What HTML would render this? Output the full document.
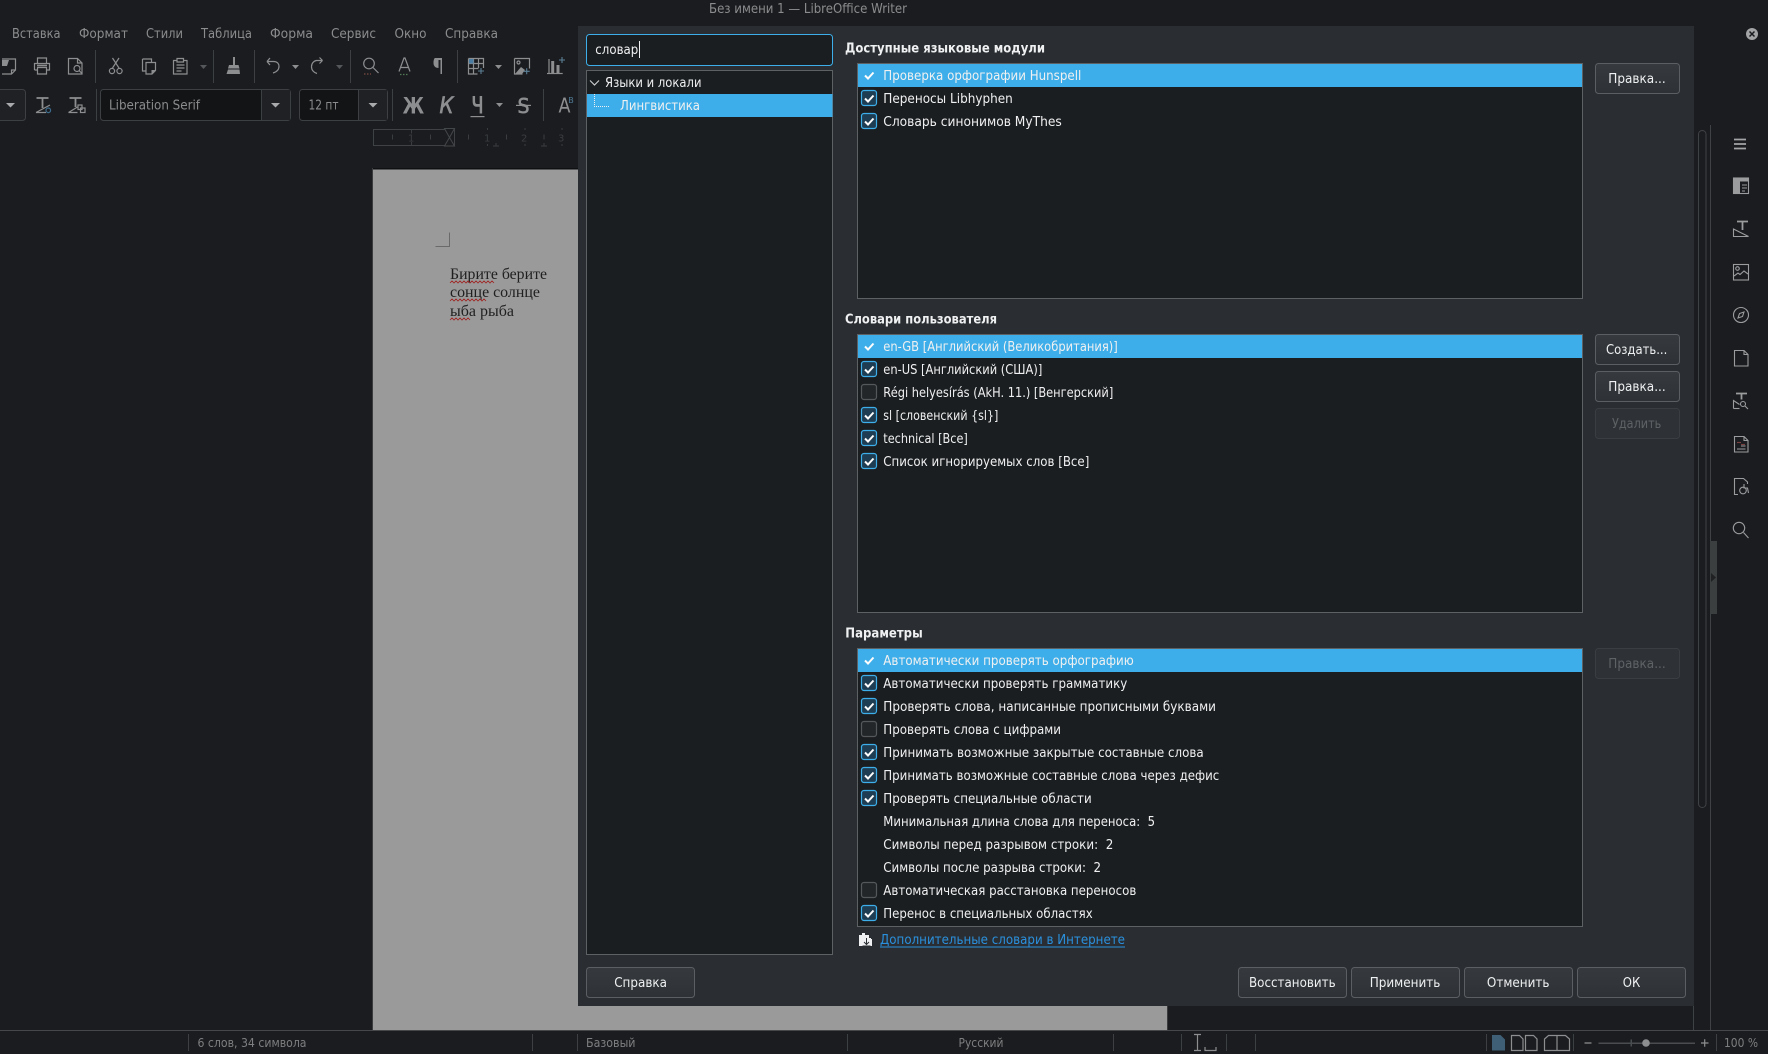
<!DOCTYPE html>
<html lang="ru"><head><meta charset="utf-8"><title>LibreOffice Writer</title>
<style>
html,body{margin:0;padding:0;background:#1b1c1f;width:1768px;height:1054px;overflow:hidden}
svg{display:block}
text{font-family:"DejaVu Sans","Liberation Sans",sans-serif;font-size:13px;white-space:pre}
.m{fill:#8b8c8d}
.w{fill:#eff0f1}
.h{fill:#eff0f1;font-weight:bold}
.d{fill:#5f6265}
.st{fill:#7e7f80;font-size:12px}
.ic{fill:none;stroke:#8c8e90;stroke-width:1.2}
.f{fill:#8c8e90;stroke:none}
.sep{stroke:#3d4043;stroke-width:1}
.cb{fill:#1e3d52;stroke:#3daee9;stroke-width:1.2}
.cu{fill:#232629;stroke:#55585b;stroke-width:1.2}
.ck{fill:none;stroke:#fcfcfc;stroke-width:2}
.btn{fill:url(#bg);stroke:#5b5f63;stroke-width:1}
.dis{fill:#2e3236;stroke:#3a3e42;stroke-width:1}
.list{fill:#1b1e20;stroke:#5e6164;stroke-width:1}
.sel{fill:#3daee9}
.dk{fill:#8c8e90}
.doc{font-family:"Liberation Serif",serif;font-size:16px;fill:#1f1f1f}
.wave{fill:none;stroke:#a02020;stroke-width:.8}
.sb{fill:none;stroke:#9a9c9e;stroke-width:1.1}
</style></head><body>
<svg width="1768" height="1054" viewBox="0 0 1768 1054" xmlns="http://www.w3.org/2000/svg">
<defs><linearGradient id="bg" x1="0" y1="0" x2="0" y2="1"><stop offset="0" stop-color="#363a3e"/><stop offset="1" stop-color="#2e3236"/></linearGradient></defs>
<rect width="1768" height="1054" fill="#1b1c1f"/>

<!-- title -->
<text x="709" y="13" class="m" textLength="198" lengthAdjust="spacingAndGlyphs">Без имени 1 — LibreOffice Writer</text>

<!-- menu -->
<g class="m">
<text x="12" y="38" textLength="48.5" lengthAdjust="spacingAndGlyphs">Вставка</text>
<text x="79" y="38" textLength="49" lengthAdjust="spacingAndGlyphs">Формат</text>
<text x="146" y="38" textLength="37" lengthAdjust="spacingAndGlyphs">Стили</text>
<text x="201" y="38" textLength="51" lengthAdjust="spacingAndGlyphs">Таблица</text>
<text x="270" y="38" textLength="43" lengthAdjust="spacingAndGlyphs">Форма</text>
<text x="331" y="38" textLength="45" lengthAdjust="spacingAndGlyphs">Сервис</text>
<text x="394.5" y="38" textLength="32" lengthAdjust="spacingAndGlyphs">Окно</text>
<text x="445" y="38" textLength="53" lengthAdjust="spacingAndGlyphs">Справка</text>
</g>

<!-- toolbar 1 -->
<g class="sep">
<path d="M95.5 50v33M213.5 50v33M254.5 50v33M350.5 50v33M457.5 50v33M96.5 89v32M392.5 89v32M543.5 89v32"/>
</g>
<g class="ic">
<path d="M2 59h13.5v11l-4 4H2M11.5 74v-4h4"/><path class="f" d="M2 60h7l-2 6H2z"/>
<path d="M37.5 63v-5h9v5M34.5 70v-6.5h15V70h-3M34.5 70h3M37.5 67.5h9V74h-9z"/><path d="M37 65.5h10" stroke-width="1.6"/>
<path d="M68.5 74V58.5h9l4.5 4.5V74zM77.5 58.5V63h4.5"/><circle cx="77" cy="68.5" r="3"/><path d="M79.2 70.7l2.8 2.8"/>
<path d="M112.5 58l6.5 10M119 58l-6.5 10"/><circle cx="112" cy="71" r="2.6"/><circle cx="119.5" cy="71" r="2.6"/>
<path d="M142.5 59h9v3M142.5 59v12h3M146 62.5h9.5v8L152 74h-6z"/><path class="f" d="M151.5 74l4-4h-4z"/>
<path d="M176.5 60.5h-3V74h13.5V60.500h-3M177 58.500h6.500v3.500H177zM176.500 65h8M176.500 68h8M176.500 71h5"/>
<path class="f" d="M233 57h2v8h3.500l1 3.500h-11.500l1-3.500H233z"/><path class="f" d="M228 69.500h11.500l.5 4.500h-13.500z"/>
<path d="M268.500 62.500h6c4.500 0 5.500 3 5.500 4.800 0 3.500-2.500 5.700-6 6.700M268 62.500l3-3.500M268 62.500l3 3.500" transform="translate(-1 -1)"/>
<path d="M322.500 60.500h-6c-3 .5-5 3-5 6.200 0 3.500 2.500 6 5.500 6.800M322.500 60.500l-3-3M322.500 60.500l-3 3" />
<circle cx="369" cy="63.500" r="5.300"/><path d="M373 67.500l5.500 5.500"/>
<path d="M399 71.500l5-13.500h1l5 13.500M400.500 67.500h8.500"/>
<path class="f" d="M435 58h7v16h-1.500V60h-2v8c-2.500 0-5-1.500-5-5s1-5 1.500-5z"/>
<path d="M468.500 58.500h15V68M468.500 58.500V74h9M468.500 63.500h15M468.500 68.500h10M473.500 58.500V74M478.500 58.500V68"/>
<rect class="f" x="469" y="59" width="4.500" height="4.500" style="fill:#4a7ba0"/>
<path d="M514.500 58.500h15v10M514.500 58.500V74h8"/><path class="f" d="M515 74l6-7 4 3-3 4z"/><circle cx="518.500" cy="62.500" r="1.500"/>
<path d="M549 59v14"/><path d="M552.700 61v12" stroke-width="3"/><path d="M558 65v8" stroke-width="3"/><path d="M547 73.500h15.700"/>
</g>
<g stroke="#5b7f96" stroke-width="1.100"><path d="M478 71h6M481 68v6M523.700 71.300h6M526.700 68.300v6M559 60h6M562 57v6"/></g>
<path d="M364 74h7" stroke="#7a4a40" stroke-width="1.200" stroke-dasharray="1.500 1.500"/>
<path d="M400 74.500h9" stroke="#4f7a55" stroke-width="1.200" stroke-dasharray="1.500 1.500"/>
<g fill="#8c8e90">
<path d="M292 65h7l-3.500 4z"/><path d="M495 65h7l-3.500 4z"/>
<path d="M200 65h7l-3.500 4z" fill="#55585a"/><path d="M336 65h7l-3.500 4z" fill="#55585a"/>
</g>

<!-- toolbar 2 -->
<rect x="-6" y="89.500" width="31.500" height="31" rx="3" fill="#1f2124" stroke="#3d4043"/>
<path d="M6 103h9l-4.500 4.500z" fill="#a8aaac"/>
<g class="ic">
<path d="M36.500 98h12M42.500 98v10" stroke-width="1.800"/><path d="M36 112.500l14-7.500M36 112.500h10"/>
<path d="M69.500 98h12M75.500 98v9" stroke-width="1.800"/><path d="M68.500 112.500l9-5.500M68.500 112.500h9"/>
<rect x="78" y="105" width="4" height="4.500"/><rect x="80.500" y="108" width="4.500" height="4.500"/>
</g>
<circle cx="48.300" cy="110.300" r="2.300" fill="none" stroke="#3c6c8c" stroke-width="1.200"/>
<rect x="100.500" y="89.500" width="190" height="31" rx="3" fill="#121415" stroke="#3d4043"/>
<path d="M261.500 90h28.500v30h-28.500z" fill="#1f2124"/><path d="M261.500 90v30" stroke="#3d4043"/>
<path d="M271 103h9l-4.500 4.500z" fill="#a8aaac"/>
<text x="109" y="109.500" class="m" textLength="91" lengthAdjust="spacingAndGlyphs">Liberation Serif</text>
<rect x="299.500" y="89.500" width="88" height="31" rx="3" fill="#121415" stroke="#3d4043"/>
<path d="M358.500 90h28.500v30h-28.500z" fill="#1f2124"/><path d="M358.500 90v30" stroke="#3d4043"/>
<path d="M368.500 103h9l-4.500 4.500z" fill="#a8aaac"/>
<text x="308.500" y="109.500" class="m" textLength="30" lengthAdjust="spacingAndGlyphs">12 пт</text>
<g fill="#8c8e90">
<text x="402.600" y="113.300" style="font-size:22px;font-weight:bold;fill:#8c8e90" textLength="21.500" lengthAdjust="spacingAndGlyphs">Ж</text>
<text x="439.500" y="113" style="font-size:22px;font-style:italic;fill:#8c8e90;stroke:#8c8e90;stroke-width:.7" textLength="14" lengthAdjust="spacingAndGlyphs">К</text>
<text x="471.500" y="113" style="font-size:22px;fill:#8c8e90;stroke:#8c8e90;stroke-width:.9" textLength="12" lengthAdjust="spacingAndGlyphs">Ч</text>
<rect x="470.500" y="116" width="14" height="1.200"/>
<path d="M496 103h7l-3.500 4z"/>
<text x="517.500" y="112.800" style="font-size:20px;fill:#8c8e90;stroke:#8c8e90;stroke-width:.6" textLength="12" lengthAdjust="spacingAndGlyphs">S</text>
<rect x="516" y="104.800" width="15" height="1.200"/>
<text x="558.500" y="112.700" style="font-size:20px;fill:#8c8e90" textLength="12" lengthAdjust="spacingAndGlyphs">A</text>
</g>
<text x="568.300" y="103" style="font-size:8px;fill:#4f7a96">B</text>

<!-- ruler -->
<rect x="373.500" y="129.500" width="81" height="16" fill="none" stroke="#3f4245"/>
<path d="M444.500 128.500h10L449.500 137.500 454.500 146h-10l5-8.500z" fill="#1b1c1f" stroke="#44474a"/>
<g stroke="#3a3d40"><path d="M392.500 134.500v5M411.500 129.500v4M411.500 142v3.500M430.500 134.500v5M468.500 134.500v5M506.500 134.500v5M544 134.500v5M487.500 128v2M487.500 144v2M525 128v2M525 144v2M562 128v2M562 144v2M493 146h6M496 143v3M541 146h6M544 143v3"/></g>
<g><text x="408" y="141.500" style="font-size:10px;fill:#3a3d40">1</text><text x="484" y="141.500" style="font-size:10px;fill:#3a3d40">1</text><text x="521" y="141.500" style="font-size:10px;fill:#3a3d40">2</text><text x="558" y="141.500" style="font-size:10px;fill:#3a3d40">3</text></g>

<!-- page -->
<rect x="373" y="169" width="794" height="861" fill="#9a9a9a"/>
<rect x="372" y="168" width="795" height="1.500" fill="#0f1011"/>
<rect x="372" y="168" width="1" height="862" fill="#3a3c3e"/>
<rect x="1167" y="1006" width="1" height="24" fill="#3a3c3e"/>
<path d="M435.500 246.500h14v-14" fill="none" stroke="#6a6a6a" stroke-width="1"/>
<text class="doc" x="450" y="279" textLength="97" lengthAdjust="spacingAndGlyphs">Бирите берите</text>
<text class="doc" x="450" y="297" textLength="90" lengthAdjust="spacingAndGlyphs">сонце солнце</text>
<text class="doc" x="450" y="316" textLength="64" lengthAdjust="spacingAndGlyphs">ыба рыба</text>
<path class="wave" d="M450 283l2-2 2 2 2-2 2 2 2-2 2 2 2-2 2 2 2-2 2 2 2-2 2 2 2-2 2 2 2-2 2 2 2-2 2 2 2-2 2 2 2-2 2 2"/>
<path class="wave" d="M450 301l2-2 2 2 2-2 2 2 2-2 2 2 2-2 2 2 2-2 2 2 2-2 2 2 2-2 2 2 2-2 2 2 2-2 2 2"/>
<path class="wave" d="M450 320l2-2 2 2 2-2 2 2 2-2 2 2 2-2 2 2 2-2 2 2"/>

<!-- dialog -->
<rect x="578" y="26" width="1116" height="980" fill="#2a2e32"/>

<!-- search -->
<rect x="586.500" y="34.500" width="246" height="31" rx="3" fill="#1b1e20" stroke="#3daee9"/>
<text x="595.300" y="54" class="w" textLength="43" lengthAdjust="spacingAndGlyphs">словар</text>
<rect x="639" y="41" width="1" height="17" fill="#eff0f1"/>

<!-- tree -->
<rect class="list" x="586.500" y="70.500" width="246" height="884"/>
<rect class="sel" x="587" y="94" width="245.500" height="23"/>
<path d="M590 80.500l4.500 4.500 4.500-4.500" fill="none" stroke="#c8cacc" stroke-width="1.200"/>
<text x="605" y="87" class="w" textLength="96.500" lengthAdjust="spacingAndGlyphs">Языки и локали</text>
<path d="M594.500 94v12.500h15" fill="none" stroke="#eff0f1" stroke-width="1" stroke-dasharray="1 1"/>
<text x="620" y="110" class="w" textLength="80" lengthAdjust="spacingAndGlyphs">Лингвистика</text>

<!-- headings -->
<text x="845" y="52.500" class="h" textLength="200" lengthAdjust="spacingAndGlyphs">Доступные языковые модули</text>
<text x="845" y="323.500" class="h" textLength="152" lengthAdjust="spacingAndGlyphs">Словари пользователя</text>
<text x="845.300" y="637.500" class="h" textLength="77.400" lengthAdjust="spacingAndGlyphs">Параметры</text>

<!-- list 1 -->
<rect class="list" x="857.500" y="63.500" width="725" height="235"/>
<rect class="sel" x="858" y="64" width="724" height="23"/>
<path class="ck" d="M865 75.500l3 3 5.500-6"/>
<text x="883.300" y="80" class="w" textLength="198" lengthAdjust="spacingAndGlyphs">Проверка орфографии Hunspell</text>
<rect class="cb" x="861.500" y="90.500" width="15" height="15" rx="2.500"/><path class="ck" d="M865 98.500l3 3 5.500-6"/>
<text x="883.300" y="103" class="w" textLength="129.500" lengthAdjust="spacingAndGlyphs">Переносы Libhyphen</text>
<rect class="cb" x="861.500" y="113.500" width="15" height="15" rx="2.500"/><path class="ck" d="M865 121.500l3 3 5.500-6"/>
<text x="883.300" y="126" class="w" textLength="178.500" lengthAdjust="spacingAndGlyphs">Словарь синонимов MyThes</text>

<!-- list 2 -->
<rect class="list" x="857.500" y="334.500" width="725" height="278"/>
<rect class="sel" x="858" y="335" width="724" height="23"/>
<path class="ck" d="M865 346.500l3 3 5.500-6"/>
<text x="883.300" y="351" class="w" textLength="234.500" lengthAdjust="spacingAndGlyphs">en-GB [Английский (Великобритания)]</text>
<rect class="cb" x="861.500" y="361.500" width="15" height="15" rx="2.500"/><path class="ck" d="M865 369.500l3 3 5.500-6"/>
<text x="883.300" y="374" class="w" textLength="159" lengthAdjust="spacingAndGlyphs">en-US [Английский (США)]</text>
<rect class="cu" x="861.500" y="384.500" width="15" height="15" rx="2.500"/>
<text x="883.300" y="397" class="w" textLength="230" lengthAdjust="spacingAndGlyphs">Régi helyesírás (AkH. 11.) [Венгерский]</text>
<rect class="cb" x="861.500" y="407.500" width="15" height="15" rx="2.500"/><path class="ck" d="M865 415.500l3 3 5.500-6"/>
<text x="883.300" y="420" class="w" textLength="115" lengthAdjust="spacingAndGlyphs">sl [словенский {sl}]</text>
<rect class="cb" x="861.500" y="430.500" width="15" height="15" rx="2.500"/><path class="ck" d="M865 438.500l3 3 5.500-6"/>
<text x="883.300" y="443" class="w" textLength="84.500" lengthAdjust="spacingAndGlyphs">technical [Все]</text>
<rect class="cb" x="861.500" y="453.500" width="15" height="15" rx="2.500"/><path class="ck" d="M865 461.500l3 3 5.500-6"/>
<text x="883.300" y="466" class="w" textLength="206" lengthAdjust="spacingAndGlyphs">Список игнорируемых слов [Все]</text>

<!-- list 3 -->
<rect class="list" x="857.500" y="648.500" width="725" height="278"/>
<rect class="sel" x="858" y="649" width="724" height="23"/>
<path class="ck" d="M865 660.500l3 3 5.500-6"/>
<text x="883.300" y="665" class="w" textLength="250.500" lengthAdjust="spacingAndGlyphs">Автоматически проверять орфографию</text>
<rect class="cb" x="861.500" y="675.500" width="15" height="15" rx="2.500"/><path class="ck" d="M865 683.500l3 3 5.500-6"/>
<text x="883.300" y="688" class="w" textLength="244" lengthAdjust="spacingAndGlyphs">Автоматически проверять грамматику</text>
<rect class="cb" x="861.500" y="698.500" width="15" height="15" rx="2.500"/><path class="ck" d="M865 706.500l3 3 5.500-6"/>
<text x="883.300" y="711" class="w" textLength="332.700" lengthAdjust="spacingAndGlyphs">Проверять слова, написанные прописными буквами</text>
<rect class="cu" x="861.500" y="721.500" width="15" height="15" rx="2.500"/>
<text x="883.300" y="734" class="w" textLength="177.700" lengthAdjust="spacingAndGlyphs">Проверять слова с цифрами</text>
<rect class="cb" x="861.500" y="744.500" width="15" height="15" rx="2.500"/><path class="ck" d="M865 752.500l3 3 5.500-6"/>
<text x="883.300" y="757" class="w" textLength="320.400" lengthAdjust="spacingAndGlyphs">Принимать возможные закрытые составные слова</text>
<rect class="cb" x="861.500" y="767.500" width="15" height="15" rx="2.500"/><path class="ck" d="M865 775.500l3 3 5.500-6"/>
<text x="883.300" y="780" class="w" textLength="336" lengthAdjust="spacingAndGlyphs">Принимать возможные составные слова через дефис</text>
<rect class="cb" x="861.500" y="790.500" width="15" height="15" rx="2.500"/><path class="ck" d="M865 798.500l3 3 5.500-6"/>
<text x="883.300" y="803" class="w" textLength="208.400" lengthAdjust="spacingAndGlyphs">Проверять специальные области</text>
<text x="883.300" y="826" class="w" textLength="271.700" lengthAdjust="spacingAndGlyphs">Минимальная длина слова для переноса:  5</text>
<text x="883.300" y="849" class="w" textLength="230" lengthAdjust="spacingAndGlyphs">Символы перед разрывом строки:  2</text>
<text x="883.300" y="872" class="w" textLength="217.700" lengthAdjust="spacingAndGlyphs">Символы после разрыва строки:  2</text>
<rect class="cu" x="861.500" y="882.500" width="15" height="15" rx="2.500"/>
<text x="883.300" y="895" class="w" textLength="253" lengthAdjust="spacingAndGlyphs">Автоматическая расстановка переносов</text>
<rect class="cb" x="861.500" y="905.500" width="15" height="15" rx="2.500"/><path class="ck" d="M865 913.500l3 3 5.500-6"/>
<text x="883.300" y="918" class="w" textLength="209.400" lengthAdjust="spacingAndGlyphs">Перенос в специальных областях</text>

<!-- link -->
<path d="M859 935h3v-2h3v2h4v3h2v1h1v7h-13z" fill="#eff0f1"/>
<path d="M866.500 938v6M864 942l2.500 2.500 2.500-2.500M862.500 946h8" fill="none" stroke="#2a2e32" stroke-width="1"/>
<text x="880" y="944" fill="#2a90de" textLength="245" lengthAdjust="spacingAndGlyphs">Дополнительные словари в Интернете</text>
<rect x="880" y="946.500" width="245" height="1" fill="#2a90de"/>

<!-- right buttons -->
<rect class="btn" x="1595.500" y="63.500" width="84" height="30" rx="3"/>
<text x="1608.300" y="83" class="w" textLength="57.400" lengthAdjust="spacingAndGlyphs">Правка...</text>
<rect class="btn" x="1595.500" y="334.500" width="84" height="30" rx="3"/>
<text x="1606" y="354" class="w" textLength="61.300" lengthAdjust="spacingAndGlyphs">Создать...</text>
<rect class="btn" x="1595.500" y="371.500" width="84" height="30" rx="3"/>
<text x="1608.300" y="391" class="w" textLength="57.400" lengthAdjust="spacingAndGlyphs">Правка...</text>
<rect class="dis" x="1595.500" y="408.500" width="84" height="30" rx="3"/>
<text x="1612" y="428" class="d" textLength="49.300" lengthAdjust="spacingAndGlyphs">Удалить</text>
<rect class="dis" x="1595.500" y="648.500" width="84" height="30" rx="3"/>
<text x="1608.300" y="668" class="d" textLength="57.400" lengthAdjust="spacingAndGlyphs">Правка...</text>

<!-- bottom buttons -->
<rect class="btn" x="586.500" y="967.500" width="108" height="30" rx="3"/>
<text x="614.200" y="987" class="w" textLength="52.800" lengthAdjust="spacingAndGlyphs">Справка</text>
<rect class="btn" x="1238.500" y="967.500" width="108" height="30" rx="3"/>
<text x="1249" y="987" class="w" textLength="86.600" lengthAdjust="spacingAndGlyphs">Восстановить</text>
<rect class="btn" x="1351.500" y="967.500" width="108" height="30" rx="3"/>
<text x="1369.700" y="987" class="w" textLength="70.700" lengthAdjust="spacingAndGlyphs">Применить</text>
<rect class="btn" x="1464.500" y="967.500" width="108" height="30" rx="3"/>
<text x="1486.900" y="987" class="w" textLength="62.600" lengthAdjust="spacingAndGlyphs">Отменить</text>
<rect class="btn" x="1577.500" y="967.500" width="108" height="30" rx="3"/>
<text x="1622.800" y="987" class="w" textLength="17.500" lengthAdjust="spacingAndGlyphs">ОК</text>

<!-- scrollbar / sidebar -->
<rect x="1698.500" y="130.500" width="7.500" height="677" rx="3.700" fill="none" stroke="#3f4245"/>
<path d="M1693.500 1006v24M1710.500 125v905" stroke="#3f4245"/>
<rect x="1710" y="541" width="7" height="73" fill="#3c3f3f"/>
<path d="M1711 573l5 4.500-5 4.500z" fill="#1f2122"/>

<circle cx="1752" cy="34" r="6" fill="#a2a4a6"/>
<path d="M1749.500 31.500l5 5M1754.500 31.500l-5 5" stroke="#1b1c1f" stroke-width="1.500"/>

<g>
<path d="M1734 139.500h12M1734 144h12M1734 148.500h12" stroke="#a2a4a6" stroke-width="1.800" fill="none"/>
<rect x="1733" y="177.500" width="16" height="4" fill="#9a9c9e"/>
<rect x="1734" y="181" width="6" height="12.500" fill="#9a9c9e"/>
<g class="sb">
<rect x="1733.500" y="178" width="15" height="15.500"/>
<path d="M1742 185h5M1742 188h5M1742 191h3"/>
<path d="M1737 221.500h11M1742.500 221.500v8.500" stroke-width="1.800"/><path d="M1733.500 236.500h15l-15-7.500z"/>
<rect x="1733.500" y="264.500" width="15" height="15.500"/><circle cx="1737.500" cy="268.500" r="1.800"/><path d="M1734 276l4-3 2 1.500 4-3.500 4 3"/>
<circle cx="1741" cy="315" r="7.500"/><path d="M1738 318l1.500-4.500 4.500-1.500-1.500 4.500z"/>
<path d="M1734.500 350.500h9.500l4 4v11.500h-13.500zM1744 350.500v4h4"/>
<path d="M1736 393.500h11M1741.500 393.500v6" stroke-width="1.800"/><path d="M1733.500 408.500v-8l6 4"/><path d="M1733.500 408.500h6"/><circle cx="1743" cy="404" r="2.500"/><path d="M1745 406l3 3"/>
<path d="M1734.500 436.500h9.500l4 4v11.500h-13.500zM1744 436.500v4h4M1741 446h4.500M1737 449h8.500"/>
<path d="M1737 442.500h4" stroke="#7a4040"/><path d="M1741 444.500h4" stroke="#7a4040"/>
<path d="M1738 494.500h-3.500v-16h9l4 3.500v2"/><circle cx="1743" cy="490.500" r="3.300"/><path d="M1744 484v4h3.500l1 5"/>
<circle cx="1739" cy="528" r="5.700"/><path d="M1743.500 532.500l5 5.500"/>
</g></g>

<!-- status bar -->
<rect x="0" y="1030" width="1710" height="24" fill="#1b1c1f"/>
<rect x="0" y="1030" width="1768" height="1" fill="#45474a"/>
<g class="sep"><path d="M188.500 1034v17M532.500 1034v17M577.500 1034v17M847.500 1034v17M1113.500 1034v17M1181.500 1034v17M1226.500 1034v17M1255.500 1034v17M1486.500 1034v17M1573.500 1034v17M1716.500 1034v17"/></g>
<text x="197.500" y="1047" class="st" textLength="109" lengthAdjust="spacingAndGlyphs">6 слов, 34 символа</text>
<text x="586" y="1047" class="st" textLength="49.500" lengthAdjust="spacingAndGlyphs">Базовый</text>
<text x="958.500" y="1047" class="st" textLength="45" lengthAdjust="spacingAndGlyphs">Русский</text>
<text x="1724" y="1047" class="st" textLength="34" lengthAdjust="spacingAndGlyphs">100 %</text>
<path d="M1194 1034.500h7M1194 1050.500h7M1197.500 1034.500v16M1205 1047v3.500h11v-3.500" class="ic" stroke-width="1"/>
<path d="M1492 1035h8.500l4.500 4.500v11h-13z" fill="#3e5f76"/>
<g class="ic" stroke-width="1">
<path d="M1511.500 1035.500h8l3.500 3.500v11.500h-11.500zM1525.500 1035.500h8l3.500 3.500v11.500h-11.500z"/>
<path d="M1544.500 1050.500V1039l4-3.500h8.500v15zM1557 1035.500h8.500l4 3.500v11.500H1557z"/>
<path d="M1584.500 1043h7M1701 1043h7.500M1704.700 1039.200v7.600"/>
</g>
<rect x="1598.500" y="1042.500" width="96.500" height="1.500" fill="#4a4d50"/>
<rect x="1630.500" y="1039.500" width="1.500" height="7" fill="#4a4d50"/>
<circle cx="1646" cy="1043" r="3.800" fill="#8c8e90"/>
</svg>
</body></html>
